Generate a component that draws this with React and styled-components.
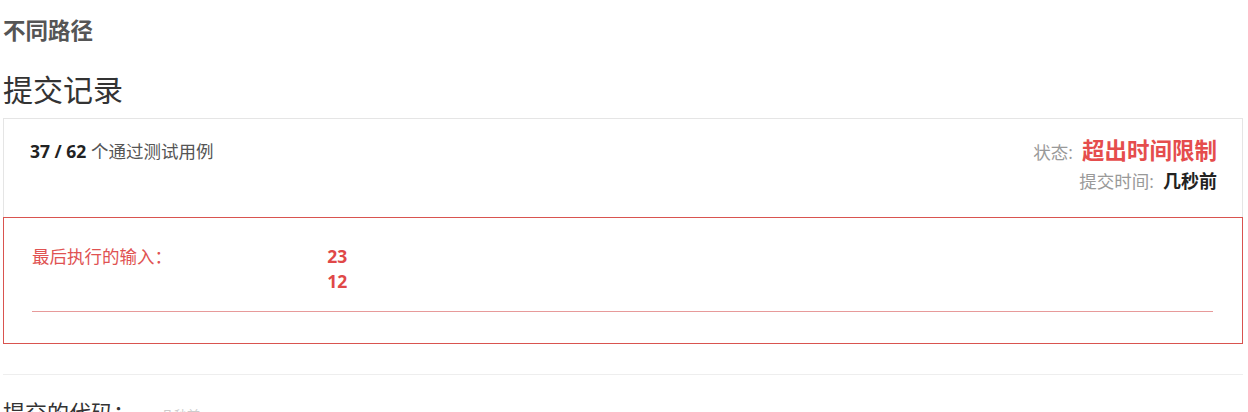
import React from 'react';
import styled, { createGlobalStyle } from 'styled-components';

const GlobalStyle = createGlobalStyle`
  body {
    margin: 0;
    background: #fff;
    font-family: "Open Sans", "Noto Sans CJK SC", sans-serif;
    color: #333;
  }
`;

const Page = styled.div`
  margin: 0 5px 0 3px;
  overflow: hidden;
  height: 412px;
`;

const ProblemTitle = styled.h3`
  margin: 18px 0 0;
  font-size: 22.5px;
  line-height: 26px;
  font-weight: 700;
  color: #555;
`;

const SectionTitle = styled.h2`
  margin: ${p => p.$top || 28}px 0 0;
  font-size: ${p => p.$size || 30}px;
  line-height: ${p => p.$lh || 36}px;
  font-weight: 400;
  color: #333;
`;

const Card = styled.div`
  margin-top: 10px;
`;

const Header = styled.div`
  display: flex;
  justify-content: space-between;
  align-items: flex-start;
  border: 1px solid #e5e5e5;
  border-bottom: none;
  padding: 18px 25px 24px 26px;
`;

const Passed = styled.div`
  font-size: 17.5px;
  line-height: 28px;
  color: #555;
  b {
    color: #222;
    font-weight: 700;
  }
`;

const Meta = styled.div`
  display: flex;
  flex-direction: column;
  align-items: flex-end;
`;

const MetaRow = styled.div`
  font-size: 17.5px;
  line-height: ${p => p.$lh}px;
  color: #999;
  margin-top: ${p => p.$mt || 0}px;
`;

const Status = styled.span`
  font-size: 22.5px;
  font-weight: 700;
  color: #e54d4d;
`;

const Time = styled.span`
  font-size: 18px;
  font-weight: 700;
  color: #222;
`;

const ErrorPanel = styled.div`
  border: 1px solid #d9534f;
  padding: 26px 29px 31px 28px;
`;

const InputGrid = styled.div`
  display: grid;
  grid-template-columns: 1fr 3fr;
  font-size: 17.5px;
  line-height: 25px;
  color: #e05252;
`;

const Values = styled.div`
  font-weight: 700;
  color: #e04848;
`;

const Rule = styled.hr`
  border: none;
  border-top: 1px solid ${p => p.$color};
  margin: ${p => p.$mt}px 0 0;
`;

const Hint = styled.span`
  font-size: 13px;
  color: #ccc;
  margin-left: 26px;
  vertical-align: middle;
`;

export default function App() {
  return (
    <>
      <GlobalStyle />
      <Page>
        <ProblemTitle>不同路径</ProblemTitle>
        <SectionTitle>提交记录</SectionTitle>
        <Card>
          <Header>
            <Passed>
              <b>37 / 62</b> 个通过测试用例
            </Passed>
            <Meta>
              <MetaRow $lh={28}>
                状态:&nbsp;&nbsp;<Status>超出时间限制</Status>
              </MetaRow>
              <MetaRow $lh={24} $mt={3}>
                提交时间:&nbsp;&nbsp;<Time>几秒前</Time>
              </MetaRow>
            </Meta>
          </Header>
          <ErrorPanel>
            <InputGrid>
              <div>最后执行的输入：</div>
              <Values>
                <div>23</div>
                <div>12</div>
              </Values>
            </InputGrid>
            <Rule $color="#e79a9a" $mt={17} />
          </ErrorPanel>
        </Card>
        <Rule $color="#eeeeee" $mt={30} />
        <SectionTitle $top={22} $size={22} $lh={30}>
          提交的代码：<Hint>几秒前</Hint>
        </SectionTitle>
      </Page>
    </>
  );
}
